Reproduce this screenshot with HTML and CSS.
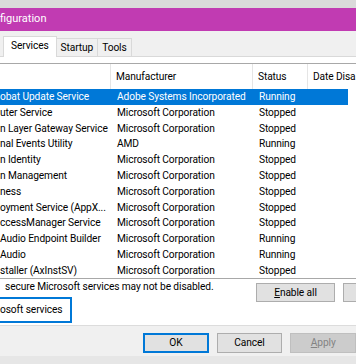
FILE: index.html
```html
<!DOCTYPE html>
<html>
<head>
<link rel="stylesheet" href="styles.css">
</head>
<body>

<div class="top-strip"></div>
<div class="titlebar">figuration</div>

<div class="tabs">
  <div class="tab active">Services</div>
  <div class="tab">Startup</div>
  <div class="tab">Tools</div>
</div>

<div class="panel">
  <div class="list">
    <div class="row head">
      <div class="cell name"></div>
      <div class="cell">Manufacturer</div>
      <div class="cell">Status</div>
      <div class="cell">Date Disa</div>
    </div>
    <div class="list-body">
      <div class="row selected"><div class="cell name">obat Update Service</div><div class="cell">Adobe Systems Incorporated</div><div class="cell">Running</div><div class="cell"></div></div>
      <div class="row"><div class="cell name">uter Service</div><div class="cell">Microsoft Corporation</div><div class="cell">Stopped</div><div class="cell"></div></div>
      <div class="row"><div class="cell name">n Layer Gateway Service</div><div class="cell">Microsoft Corporation</div><div class="cell">Stopped</div><div class="cell"></div></div>
      <div class="row"><div class="cell name">nal Events Utility</div><div class="cell">AMD</div><div class="cell">Running</div><div class="cell"></div></div>
      <div class="row"><div class="cell name">n Identity</div><div class="cell">Microsoft Corporation</div><div class="cell">Stopped</div><div class="cell"></div></div>
      <div class="row"><div class="cell name">n Management</div><div class="cell">Microsoft Corporation</div><div class="cell">Stopped</div><div class="cell"></div></div>
      <div class="row"><div class="cell name">ness</div><div class="cell">Microsoft Corporation</div><div class="cell">Stopped</div><div class="cell"></div></div>
      <div class="row"><div class="cell name">oyment Service (AppX...</div><div class="cell">Microsoft Corporation</div><div class="cell">Stopped</div><div class="cell"></div></div>
      <div class="row"><div class="cell name">ccessManager Service</div><div class="cell">Microsoft Corporation</div><div class="cell">Stopped</div><div class="cell"></div></div>
      <div class="row"><div class="cell name">Audio Endpoint Builder</div><div class="cell">Microsoft Corporation</div><div class="cell">Running</div><div class="cell"></div></div>
      <div class="row"><div class="cell name">Audio</div><div class="cell">Microsoft Corporation</div><div class="cell">Running</div><div class="cell"></div></div>
      <div class="row"><div class="cell name">staller (AxInstSV)</div><div class="cell">Microsoft Corporation</div><div class="cell">Stopped</div><div class="cell"></div></div>
    </div>
  </div>

  <div class="below">
    <div class="below-left">
      <div class="note">secure Microsoft services may not be disabled.</div>
      <div class="hide-box">osoft services</div>
    </div>
    <div class="below-right">
      <button class="btn wide"><u>E</u>nable all</button>
      <button class="btn wide clipped"><u>D</u>isable all</button>
    </div>
  </div>
</div>

<div class="footer">
  <button class="btn default">OK</button>
  <button class="btn">Cancel</button>
  <button class="btn" disabled><u>A</u>pply</button>
</div>
<div class="bottom-strip"></div>

</body>
</html>
```

FILE: styles.css
```css
body {
  margin: 0;
  width: 356px;
  height: 364px;
  overflow: hidden;
  background: #f0f0f0;
  font-family: Roboto, "Noto Sans", sans-serif;
  font-size: 10.2px;
  letter-spacing: -0.1px;
  color: #000;
}

.top-strip {
  height: 8px;
  background: #dadada;
}

.titlebar {
  height: 23px;
  line-height: 22px;
  background: #c13bb2;
  color: #fff;
  font-size: 11px;
  letter-spacing: 0;
  white-space: nowrap;
}

.tabs {
  height: 26px;
  box-sizing: border-box;
  display: flex;
  align-items: flex-end;
  padding-left: 3px;
  border-bottom: 1px solid #d9d9d9;
}

.tab {
  height: 17px;
  line-height: 18px;
  padding: 0 4px;
  border: 1px solid #d9d9d9;
  border-bottom: none;
  background: #f0f0f0;
  margin-left: -1px;
}

.tab.active {
  height: 20px;
  line-height: 17px;
  padding: 0 7px;
  background: #fff;
  margin-bottom: -1px;
  margin-left: 0;
  position: relative;
  z-index: 1;
}

.panel {
  height: 269px;
  box-sizing: border-box;
  background: #fff;
  padding-top: 6px;
  border-bottom: 1px solid #dcdcdc;
}

.list {
  border-top: 1px solid #a8a8a8;
  border-bottom: 1px solid #a8a8a8;
  width: 400px;
}

.row {
  display: grid;
  grid-template-columns: 111px 142px 55px 40px;
  height: 15.8px;
  line-height: 15.8px;
  white-space: nowrap;
}

.row .cell {
  overflow: hidden;
  padding-left: 6px;
}

.row .cell.name {
  padding-left: 0;
}

.row.head {
  height: 25px;
  line-height: 25px;
  grid-template-columns: 111px 142px 55px 80px;
}

.row.head .cell {
  border-right: 1px solid #e5e5e5;
  padding-left: 5px;
}

.row.head .cell.name {
  padding-left: 0;
}

.list-body {
  height: 189px;
  overflow: hidden;
}

.row.selected {
  background: #0078d7;
  color: #fff;
  width: 348px;
}

.below {
  display: flex;
  justify-content: space-between;
}

.note {
  height: 16px;
  line-height: 16px;
  padding-left: 5px;
  white-space: nowrap;
}

.hide-box {
  margin-top: 2px;
  width: 70px;
  height: 22px;
  line-height: 22px;
  border: 2px solid #0078d7;
  border-left: none;
  white-space: nowrap;
}

.below-right {
  display: flex;
  gap: 8px;
  padding-top: 4px;
  margin-right: -80px;
}

.btn {
  font-family: Roboto, "Noto Sans", sans-serif;
  font-size: 10.2px;
  letter-spacing: -0.1px;
  color: #000;
  background: #e1e1e1;
  border: 1px solid #adadad;
  height: 19px;
  width: 67px;
  padding: 0;
  line-height: 16px;
}

.btn.wide {
  width: 79px;
}

.btn.wide.clipped {
  width: 93px;
}

.btn.default {
  border: 2px solid #0078d7;
}

.btn:disabled {
  background: #cccccc;
  border-color: #bfbfbf;
  color: #838383;
}

.footer {
  height: 30px;
  display: flex;
  gap: 8px;
  padding-top: 7px;
  padding-left: 143px;
  box-sizing: border-box;
}

.footer .btn {
  height: 20px;
}

.bottom-strip {
  height: 8px;
  background: #e6e6e6;
}
```
